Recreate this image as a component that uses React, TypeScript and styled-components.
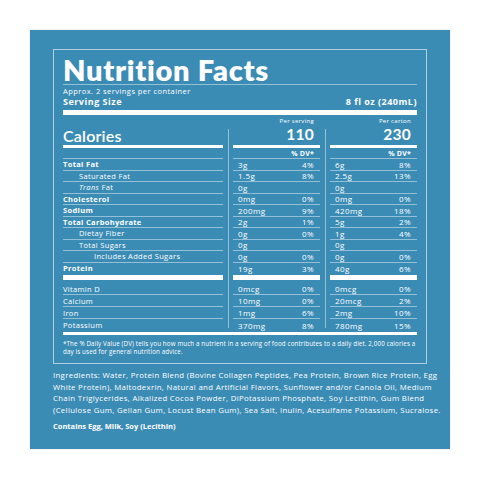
import React from 'react';
import styled, { createGlobalStyle } from 'styled-components';

const GlobalStyle = createGlobalStyle`
  body {
    margin: 0;
    background: #fff;
    font-family: 'Open Sans', 'Liberation Sans', sans-serif;
  }
`;

const line = 'rgba(255, 255, 255, 0.45)';

const Page = styled.div`
  width: 480px;
  height: 480px;
  padding: 30px;
  box-sizing: border-box;
`;

const Panel = styled.div`
  width: 420px;
  height: 419px;
  box-sizing: border-box;
  padding: 19px 23px 0;
  background: #3b8cb5;
  color: #fff;
  box-shadow: 0 0 2px rgba(0, 0, 0, 0.15);
`;

const LabelBox = styled.div`
  height: 315px;
  box-sizing: border-box;
  padding: 0 9px;
  border: 1px solid rgba(255, 255, 255, 0.6);
`;

const Title = styled.h1`
  margin: 5px 0 0;
  height: 29px;
  line-height: 29px;
  font-family: Lato, 'Open Sans', sans-serif;
  font-size: 29px;
  font-weight: 800;
  letter-spacing: 0.7px;
  border-bottom: 1px solid ${line};
`;

const Approx = styled.div`
  padding-top: 1px;
  line-height: 10px;
  font-size: 7.5px;
  letter-spacing: 0.45px;
`;

const ServingRow = styled.div`
  display: flex;
  justify-content: space-between;
  line-height: 11px;
  font-size: 9px;
  font-weight: 700;
  letter-spacing: 0.5px;
`;

const ThickBar = styled.div<{ $h: number; $gap: number }>`
  height: ${(p) => p.$h}px;
  margin-top: ${(p) => p.$gap}px;
  background: #fff;
`;

const Facts = styled.div`
  display: grid;
  grid-template-columns: 160px 10px 87px 10px 87px;
`;

const Divider = styled.div<{ $col: number }>`
  grid-column: ${(p) => p.$col};
  grid-row: 1 / 18;
  justify-self: center;
  width: 1px;
  margin: 14px 0 3px;
  background: ${line};
`;

const CalCell = styled.div`
  height: 33px;
  box-sizing: border-box;
  border-bottom: 3px solid #fff;
  display: flex;
  align-items: flex-end;
`;

const CalLabel = styled(CalCell)`
  padding-bottom: 2px;
  font-family: Lato, 'Open Sans', sans-serif;
  font-size: 16px;
  font-weight: 600;
  line-height: 15px;
  letter-spacing: 0.2px;
`;

const CalValue = styled(CalCell)`
  flex-direction: column;
  justify-content: flex-end;
  align-items: flex-end;
  padding: 0 6px 4px 0;
`;

const Per = styled.span`
  font-size: 6px;
  line-height: 7px;
  letter-spacing: 0.3px;
  margin-bottom: 2px;
`;

const Big = styled.span`
  font-family: Lato, 'Open Sans', sans-serif;
  font-size: 15.5px;
  font-weight: 700;
  line-height: 14px;
  letter-spacing: 0.3px;
`;

const Cell = styled.div<{ $h?: number; $top?: number; $last?: boolean }>`
  height: ${(p) => p.$h ?? 11.5}px;
  box-sizing: border-box;
  padding-top: ${(p) => p.$top ?? 0}px;
  border-bottom: ${(p) => (p.$last ? 'none' : `1px solid ${line}`)};
  display: flex;
  align-items: center;
  font-size: 7.5px;
  white-space: nowrap;
`;

const Label = styled(Cell)<{ $indent?: number; $bold?: boolean }>`
  padding-left: ${(p) => p.$indent ?? 0}px;
  font-weight: ${(p) => (p.$bold ? 700 : 400)};
  letter-spacing: 0.33px;
`;

const Value = styled(Cell)<{ $bold?: boolean }>`
  justify-content: space-between;
  padding-left: 5px;
  padding-right: 6px;
  font-weight: ${(p) => (p.$bold ? 700 : 400)};
  font-size: 8px;
  letter-spacing: 0.4px;
`;

const DvHead = styled(Value)`
  justify-content: flex-end;
  font-weight: 700;
  font-size: 7px;
  letter-spacing: 0.2px;
`;

const FullBar = styled.div`
  grid-column: 1 / -1;
  height: 3px;
  margin-top: 1px;
  background: #fff;
`;

const Footnote = styled.p`
  margin: 5px 0 0;
  font-size: 6.2px;
  line-height: 7.5px;
  letter-spacing: 0.15px;
  white-space: nowrap;
`;

const Ingredients = styled.p`
  margin: 6px 0 0;
  font-size: 7.8px;
  line-height: 11.6px;
  letter-spacing: 0.33px;
  white-space: nowrap;

  & > span {
    display: block;
  }
`;

const Contains = styled.p`
  margin: 5px 0 0;
  font-size: 7.5px;
  line-height: 11px;
  font-weight: 700;
`;

type Row = {
  name: React.ReactNode;
  indent?: number;
  bold?: boolean;
  serving: [string, string];
  carton: [string, string];
};

const main: Row[] = [
  { name: 'Total Fat', bold: true, serving: ['3g', '4%'], carton: ['6g', '8%'] },
  { name: 'Saturated Fat', indent: 16, serving: ['1.5g', '8%'], carton: ['2.5g', '13%'] },
  {
    name: (
      <>
        <i>Trans</i>&nbsp;Fat
      </>
    ),
    indent: 16,
    serving: ['0g', ''],
    carton: ['0g', ''],
  },
  { name: 'Cholesterol', bold: true, serving: ['0mg', '0%'], carton: ['0mg', '0%'] },
  { name: 'Sodium', bold: true, serving: ['200mg', '9%'], carton: ['420mg', '18%'] },
  { name: 'Total Carbohydrate', bold: true, serving: ['2g', '1%'], carton: ['5g', '2%'] },
  { name: 'Dietay Fiber', indent: 16, serving: ['0g', '0%'], carton: ['1g', '4%'] },
  { name: 'Total Sugars', indent: 16, serving: ['0g', ''], carton: ['0g', ''] },
  { name: 'Includes Added Sugars', indent: 31, serving: ['0g', '0%'], carton: ['0g', '0%'] },
  { name: 'Protein', bold: true, serving: ['19g', '3%'], carton: ['40g', '6%'] },
];

const vitamins: Row[] = [
  { name: 'Vitamin D', serving: ['0mcg', '0%'], carton: ['0mcg', '0%'] },
  { name: 'Calcium', serving: ['10mg', '0%'], carton: ['20mcg', '2%'] },
  { name: 'Iron', serving: ['1mg', '6%'], carton: ['2mg', '10%'] },
  { name: 'Potassium', serving: ['370mg', '8%'], carton: ['780mg', '15%'] },
];

const App: React.FC = () => {
  return (
    <Page>
      <GlobalStyle />
      <Panel>
        <LabelBox>
          <Title>Nutrition Facts</Title>
          <Approx>Approx. 2 servings per container</Approx>
          <ServingRow>
            <span>Serving Size</span>
            <span>8 fl oz (240mL)</span>
          </ServingRow>
          <ThickBar $h={5} $gap={3} />

          <Facts>
            <Divider $col={2} />
            <Divider $col={4} />

            <CalLabel>Calories</CalLabel>
            <CalValue>
              <Per>Per serving</Per>
              <Big>110</Big>
            </CalValue>
            <CalValue>
              <Per>Per carton</Per>
              <Big>230</Big>
            </CalValue>

            <Label $h={11} />
            <DvHead $h={11}>% DV*</DvHead>
            <DvHead $h={11}>% DV*</DvHead>

            {main.map((r, i) => {
              const last = i === main.length - 1;
              return (
                <React.Fragment key={i}>
                  <Label $indent={r.indent} $bold={r.bold} $last={last}>
                    {r.name}
                  </Label>
                  <Value $last={last}>
                    <span>{r.serving[0]}</span>
                    <span>{r.serving[1]}</span>
                  </Value>
                  <Value $last={last}>
                    <span>{r.carton[0]}</span>
                    <span>{r.carton[1]}</span>
                  </Value>
                </React.Fragment>
              );
            })}

            <ThickBar $h={5} $gap={1} />
            <ThickBar $h={5} $gap={1} />
            <ThickBar $h={5} $gap={1} />

            {vitamins.map((r, i) => {
              const last = i === vitamins.length - 1;
              const h = i === 0 ? 15 : 12;
              const top = i === 0 ? 3 : 0;
              return (
                <React.Fragment key={i}>
                  <Label $h={h} $top={top} $last={last}>
                    {r.name}
                  </Label>
                  <Value $h={h} $top={top} $last={last}>
                    <span>{r.serving[0]}</span>
                    <span>{r.serving[1]}</span>
                  </Value>
                  <Value $h={h} $top={top} $last={last}>
                    <span>{r.carton[0]}</span>
                    <span>{r.carton[1]}</span>
                  </Value>
                </React.Fragment>
              );
            })}

            <FullBar />
          </Facts>

          <Footnote>
            *The % Daily Value (DV) tells you how much a nutrient in a serving of food contributes to a daily diet. 2,000 calories a
            <br />
            day is used for general nutrition advice.
          </Footnote>
        </LabelBox>

        <Ingredients>
          <span>Ingredients: Water, Protein Blend (Bovine Collagen Peptides, Pea Protein, Brown Rice Protein, Egg</span>
          <span>White Protein), Maltodexrin, Natural and Artificial Flavors, Sunflower and/or Canola Oil, Medium</span>
          <span>Chain Triglycerides, Alkalized Cocoa Powder, DiPotassium Phosphate, Soy Lecithin, Gum Blend</span>
          <span>(Cellulose Gum, Gellan Gum, Locust Bean Gum), Sea Salt, Inulin, Acesulfame Potassium, Sucralose.</span>
        </Ingredients>
        <Contains>Contains Egg, Milk, Soy (Lecithin)</Contains>
      </Panel>
    </Page>
  );
};

export default App;
